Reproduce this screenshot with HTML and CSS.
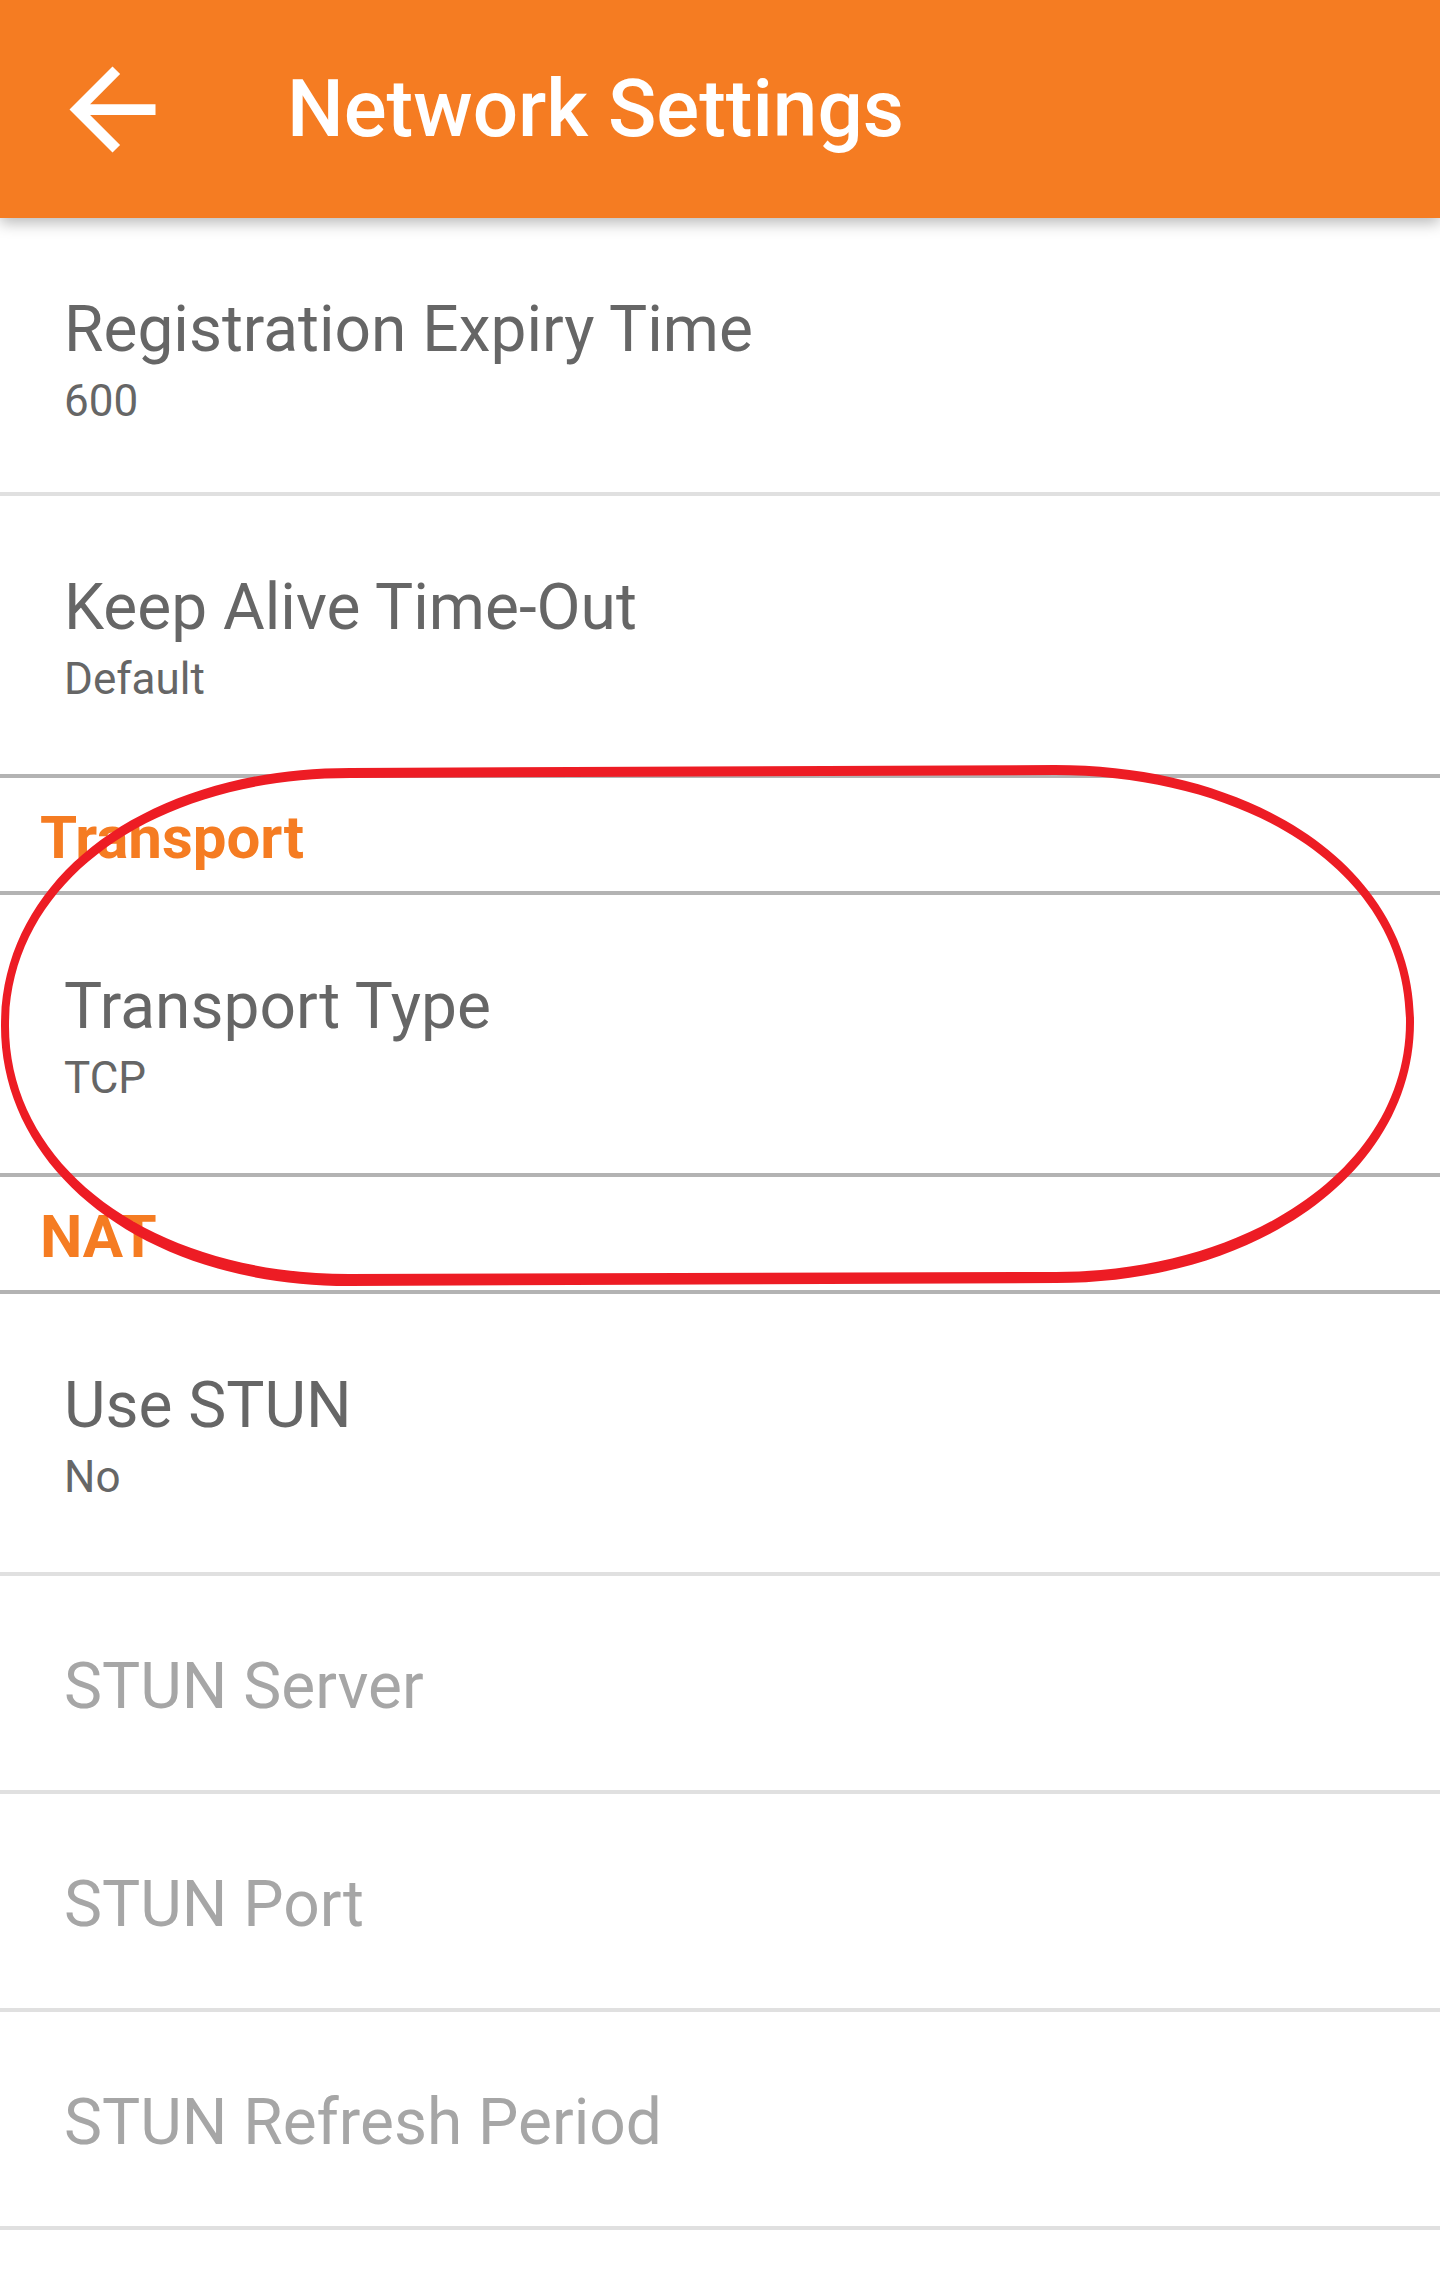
FILE: index.html
```html
<!DOCTYPE html>
<html lang="en">
<head>
<meta charset="utf-8">
<title>Network Settings</title>
<link rel="stylesheet" href="styles.css">
</head>
<body>
<div class="screen">
  <header class="toolbar">
    <button class="back" aria-label="Back">
      <svg viewBox="0 0 24 24" width="129" height="129"><path d="M20 11H7.83l5.59-5.59L12 4l-8 8 8 8 1.41-1.41L7.83 13H20v-2z" fill="#fff"/></svg>
    </button>
    <h1 class="title">Network Settings</h1>
  </header>

  <main class="prefs">
    <div class="pref pref-two pref-first">
      <div class="pref-title">Registration Expiry Time</div>
      <div class="pref-summary">600</div>
    </div>
    <div class="pref pref-two pref-last-in-group">
      <div class="pref-title">Keep Alive Time-Out</div>
      <div class="pref-summary">Default</div>
    </div>
    <div class="category">Transport</div>
    <div class="pref pref-two pref-last-in-group">
      <div class="pref-title">Transport Type</div>
      <div class="pref-summary">TCP</div>
    </div>
    <div class="category">NAT</div>
    <div class="pref pref-two">
      <div class="pref-title">Use STUN</div>
      <div class="pref-summary">No</div>
    </div>
    <div class="pref pref-one disabled">
      <div class="pref-title">STUN Server</div>
    </div>
    <div class="pref pref-one disabled">
      <div class="pref-title">STUN Port</div>
    </div>
    <div class="pref pref-one disabled">
      <div class="pref-title">STUN Refresh Period</div>
    </div>
  </main>

  <svg class="annotation" viewBox="0 0 1440 2286" width="1440" height="2286" aria-hidden="true">
    <path fill="#ED1C24" fill-rule="evenodd" d="M 350 768 L 1055 765 C 1255 765 1414 868 1414 1022 C 1414 1174 1255 1283 1056 1283 L 349 1286 C 146 1286 1 1172 1 1026 C 1 878 146 768 350 768 Z M 350 778 L 1055 775 C 1248 775 1406 872 1406 1022 C 1406 1168 1248 1272 1056 1272 L 349 1274 C 153 1274 9 1168 9 1026 C 9 882 153 778 350 778 Z"/>
  </svg>
</div>
</body>
</html>
```

FILE: styles.css
```css
* {
  box-sizing: border-box;
}

html, body {
  margin: 0;
  padding: 0;
  background: #ffffff;
}

body {
  font-family: Roboto, "Noto Sans", "Liberation Sans", sans-serif;
}

.screen {
  position: relative;
  width: 1440px;
  height: 2286px;
  overflow: hidden;
  background: #ffffff;
}

.toolbar {
  position: relative;
  z-index: 1;
  display: flex;
  align-items: center;
  height: 218px;
  padding-left: 48px;
  background: #F57C22;
  box-shadow: 0 5px 14px rgba(0, 0, 0, 0.28);
}

.back {
  display: flex;
  padding: 0;
  margin: 0;
  border: 0;
  background: transparent;
  width: 129px;
  height: 129px;
}

.title {
  margin: 0 0 0 110px;
  font-size: 80px;
  font-weight: 500;
  color: #ffffff;
  line-height: normal;
}

.prefs {
  display: flex;
  flex-direction: column;
}

.pref {
  display: flex;
  flex-direction: column;
  justify-content: center;
  padding: 4px 0 0 64px;
  border-bottom: 4px solid #e0e0e0;
}

.pref-two {
  height: 282px;
}

.pref-first {
  height: 278px;
  padding-top: 8px;
}

.pref-last-in-group {
  border-bottom-color: #b3b3b3;
}

.pref-one {
  height: 218px;
  padding-top: 8px;
}

.pref-title {
  font-size: 64px;
  line-height: 74px;
  color: #666666;
}

.pref-summary {
  margin-top: 9px;
  font-size: 44px;
  line-height: 50px;
  color: #666666;
}

.disabled .pref-title {
  color: #a6a6a6;
}

.category {
  display: flex;
  align-items: center;
  height: 117px;
  padding: 6px 0 0 40px;
  border-bottom: 4px solid #b3b3b3;
  font-size: 60px;
  font-weight: 700;
  color: #F57C22;
}

.annotation {
  position: absolute;
  top: 0;
  left: 0;
  z-index: 2;
  pointer-events: none;
}
```
